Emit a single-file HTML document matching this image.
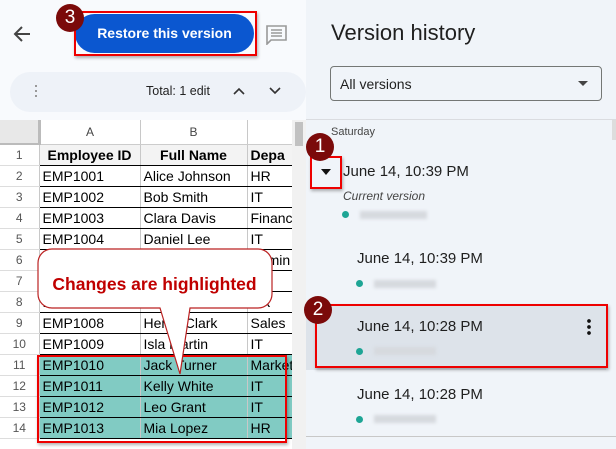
<!DOCTYPE html>
<html><head><style>
*{margin:0;padding:0;box-sizing:border-box}
body{width:616px;height:449px;overflow:hidden;position:relative;background:#f8fafd;font-family:"Liberation Sans",sans-serif}
.a{position:absolute}
.grid td{border-right:1px solid #c8c8c8;border-bottom:1px solid #000;height:21px;font-size:14px;padding:0 3px;white-space:nowrap;overflow:hidden;color:#000}
.grid td.rn{background:#fff;color:#555;font-size:12px;text-align:center;border-bottom:1px solid #ddd;border-right:1px solid #c8c8c8;padding:0}
.grid tr.hl td:not(.rn){background:#81cbc3}
.grid{border-collapse:collapse;table-layout:fixed;width:292px}
.badge{position:absolute;width:28px;height:28px;border-radius:50%;background:#7b0a0a;color:#fff;font-size:19px;text-align:center;line-height:28px}
.vt{position:absolute;font-size:15px;color:#1f1f1f}
.dot{position:absolute;width:7px;height:7px;border-radius:50%;background:#1ea595}
.blur{position:absolute;height:8px;width:56px;background:#d6d9de;filter:blur(1.5px)}
</style></head><body>
<div class="a" style="left:0;top:0;width:306px;height:120px;background:#f8fafd"></div>
<svg class="a" style="left:12px;top:24px" width="20" height="20" viewBox="0 0 20 20"><path d="M18 10H3M10 3L3 10l7 7" stroke="#444" stroke-width="2" fill="none"/></svg>
<div class="a" style="left:75px;top:14px;width:179px;height:39px;border-radius:20px;background:#0b57d0;color:#fff;font-weight:bold;font-size:14px;text-align:center;line-height:39px">Restore this version</div>
<div class="a" style="left:74px;top:11px;width:183px;height:45px;border:2px solid #e00;box-shadow:1px 2px 3px rgba(0,0,0,.3)"></div>
<div class="badge" style="left:56px;top:4px">3</div>
<svg class="a" style="left:266px;top:25px" width="22" height="20" viewBox="0 0 22 20"><path d="M1 1h19v14H5l-4 4z" fill="none" stroke="#999" stroke-width="1.6"/><path d="M5 5h11M5 8h11M5 11h11" stroke="#999" stroke-width="1.4"/></svg>
<div class="a" style="left:10px;top:72px;width:296px;height:40px;border-radius:20px;background:#eef2f8"></div>
<div class="a" style="left:35px;top:85px;width:2px;height:14px;background:repeating-linear-gradient(#999 0 2px,transparent 2px 5px)"></div>
<div class="a" style="left:146px;top:84px;font-size:12.5px;color:#222">Total: 1 edit</div>
<svg class="a" style="left:233px;top:87px" width="12" height="8"><path d="M1 7l5-5 5 5" stroke="#333" stroke-width="1.6" fill="none"/></svg>
<svg class="a" style="left:269px;top:87px" width="12" height="8"><path d="M1 1l5 5 5-5" stroke="#333" stroke-width="1.6" fill="none"/></svg>
<div class="a" style="left:0;top:120px;width:292px;height:329px;background:#fff;overflow:hidden">
<table class="grid">
<colgroup><col style="width:39px"><col style="width:101px"><col style="width:107px"><col style="width:45px"></colgroup>
<tr style="height:24px"><td class="rn" style="background:#e8e8e8;height:24px;border-bottom:2px solid #bbb;border-right:3px solid #bbb"></td><td style="text-align:center;font-size:12px;color:#444;border-bottom:1px solid #ccc;height:24px">A</td><td style="text-align:center;font-size:12px;color:#444;border-bottom:1px solid #ccc">B</td><td style="border-bottom:1px solid #ccc"></td></tr>
<tr><td class="rn">1</td><td style="background:#f3f3f3;font-weight:bold;text-align:center">Employee ID</td><td style="background:#f3f3f3;font-weight:bold;text-align:center">Full Name</td><td style="background:#f3f3f3;font-weight:bold">Depa</td></tr>
<tr><td class="rn">2</td><td>EMP1001</td><td>Alice Johnson</td><td>HR</td></tr>
<tr><td class="rn">3</td><td>EMP1002</td><td>Bob Smith</td><td>IT</td></tr>
<tr><td class="rn">4</td><td>EMP1003</td><td>Clara Davis</td><td>Financ</td></tr>
<tr><td class="rn">5</td><td>EMP1004</td><td>Daniel Lee</td><td>IT</td></tr>
<tr><td class="rn">6</td><td>EMP1005</td><td>Eva</td><td>Admin</td></tr>
<tr><td class="rn">7</td><td>EMP1006</td><td>Frank</td><td>IT</td></tr>
<tr><td class="rn">8</td><td>EMP1007</td><td>Grace</td><td>HR</td></tr>
<tr><td class="rn">9</td><td>EMP1008</td><td>Henry Clark</td><td>Sales</td></tr>
<tr><td class="rn">10</td><td>EMP1009</td><td>Isla Martin</td><td>IT</td></tr>
<tr class="hl"><td class="rn">11</td><td>EMP1010</td><td>Jack Turner</td><td>Market</td></tr>
<tr class="hl"><td class="rn">12</td><td>EMP1011</td><td>Kelly White</td><td>IT</td></tr>
<tr class="hl"><td class="rn">13</td><td>EMP1012</td><td>Leo Grant</td><td>IT</td></tr>
<tr class="hl"><td class="rn">14</td><td>EMP1013</td><td>Mia Lopez</td><td>HR</td></tr>
</table></div>
<div class="a" style="left:292px;top:120px;width:14px;height:329px;background:#f1f1f1"></div>
<div class="a" style="left:295px;top:122px;width:8px;height:24px;background:#c1c1c1"></div>
<div class="a" style="left:37px;top:355px;width:250px;height:88px;border:2px solid #e00;box-shadow:1px 2px 3px rgba(0,0,0,.3)"></div>
<svg class="a" style="left:34px;top:246px" width="244" height="136"><path d="M18 3H224a14 14 0 0 1 14 14V48a14 14 0 0 1-14 14H156L146 128 126 62H18A14 14 0 0 1 4 48V17A14 14 0 0 1 18 3z" fill="#fff" stroke="#b22" stroke-width="1.2"/></svg>
<div class="a" style="left:37px;top:274px;width:235px;text-align:center;color:#c00000;font-weight:bold;font-size:17.5px">Changes are highlighted</div>
<div class="a" style="left:306px;top:0;width:310px;height:449px;background:#f0f4f9"></div>
<div class="a" style="left:331px;top:20px;font-size:22px;color:#1f1f1f">Version history</div>
<div class="a" style="left:330px;top:66px;width:272px;height:35px;border:1px solid #747775;border-radius:4px;font-size:14px;color:#1f1f1f;padding:9px 9px">All versions</div>
<svg class="a" style="left:578px;top:81px" width="10" height="5"><path d="M0 0h10L5 5z" fill="#444"/></svg>
<div class="a" style="left:306px;top:119px;width:310px;height:1px;background:#dadce0"></div>
<div class="a" style="left:331px;top:126px;font-size:11px;color:#444">Saturday</div>
<div class="a" style="left:310px;top:156px;width:32px;height:33px;border:2px solid #e00;box-shadow:1px 2px 3px rgba(0,0,0,.3)"></div>
<svg class="a" style="left:321px;top:169px" width="10" height="6"><path d="M0 0h10L5 6z" fill="#111"/></svg>
<div class="badge" style="left:306px;top:133px">1</div>
<div class="vt" style="left:343px;top:163px">June 14, 10:39 PM</div>
<div class="a" style="left:343px;top:189px;font-size:12px;font-style:italic;color:#444">Current version</div>
<div class="dot" style="left:342px;top:211px"></div><div class="blur" style="left:360px;top:211px;width:67px"></div>
<div class="vt" style="left:357px;top:250px">June 14, 10:39 PM</div>
<div class="dot" style="left:356px;top:280px"></div><div class="blur" style="left:374px;top:280px;width:62px"></div>
<div class="a" style="left:306px;top:304px;width:300px;height:66px;background:#dde3ea"></div>
<div class="a" style="left:315px;top:304px;width:293px;height:64px;border:2px solid #e00;box-shadow:1px 2px 3px rgba(0,0,0,.3)"></div>
<div class="badge" style="left:304px;top:296px">2</div>
<div class="vt" style="left:357px;top:318px">June 14, 10:28 PM</div>
<div class="a" style="left:587px;top:318px;width:4px;height:18px;background:radial-gradient(circle,#111 1.7px,transparent 2px) 0 0/4px 6px"></div>
<div class="dot" style="left:356px;top:348px"></div><div class="blur" style="left:374px;top:347px;width:62px"></div>
<div class="vt" style="left:357px;top:386px">June 14, 10:28 PM</div>
<div class="dot" style="left:356px;top:416px"></div><div class="blur" style="left:374px;top:415px;width:62px"></div>
<div class="a" style="left:306px;top:436px;width:310px;height:1px;background:#c8c8c8"></div>
<div class="a" style="left:612px;top:120px;width:4px;height:20px;background:#ddd"></div>
</body></html>
